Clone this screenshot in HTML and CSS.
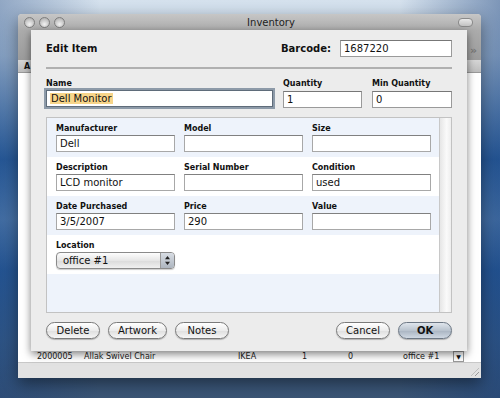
FILE: index.html
```html
<!DOCTYPE html>
<html lang="en">
<head>
  <meta charset="UTF-8" />
  <title>Inventory</title>
  <link rel="stylesheet" href="styles.css">
</head>
<body>

  <div class="window">
    <div class="titlebar">
      <div class="lights">
        <span class="light"></span>
        <span class="light"></span>
        <span class="light"></span>
      </div>
      <div class="title">Inventory</div>
      <span class="pill"></span>
    </div>

    <div class="toolbar">
      <span class="chevron">&raquo;</span>
    </div>

    <div class="table-head">
      <span class="th">A</span>
    </div>

    <div class="table-body">
      <div class="table-rows">
        <div class="trow">
          <span class="c-id">2000005</span>
          <span class="c-name">Allak Swivel Chair</span>
          <span class="c-maker">IKEA</span>
          <span class="c-qty">1</span>
          <span class="c-min">0</span>
          <span class="c-loc">office #1</span>
        </div>
      </div>
      <div class="table-scroll">
        <span class="arrow-down">&#9660;</span>
      </div>
    </div>

    <div class="statusbar">
      <span class="grip"></span>
    </div>

    <!-- sheet dialog over the window -->
    <div class="sheet">
      <div class="sheet-head">
        <span class="sheet-title">Edit Item</span>
        <div class="barcode">
          <label for="barcode">Barcode:</label>
          <input type="text" id="barcode" class="field field-barcode" value="1687220">
        </div>
      </div>

      <div class="top-fields">
        <div class="group g-name">
          <label>Name</label>
          <div class="field focused"><span class="sel">Dell Monitor</span></div>
        </div>
        <div class="group g-qty">
          <label>Quantity</label>
          <div class="field">1</div>
        </div>
        <div class="group g-min">
          <label>Min Quantity</label>
          <div class="field">0</div>
        </div>
      </div>

      <div class="scroll-box">
        <div class="rows">
          <div class="row alt">
            <div class="group"><label>Manufacturer</label><div class="field">Dell</div></div>
            <div class="group"><label>Model</label><div class="field"></div></div>
            <div class="group"><label>Size</label><div class="field"></div></div>
          </div>
          <div class="row">
            <div class="group"><label>Description</label><div class="field">LCD monitor</div></div>
            <div class="group"><label>Serial Number</label><div class="field"></div></div>
            <div class="group"><label>Condition</label><div class="field">used</div></div>
          </div>
          <div class="row alt">
            <div class="group"><label>Date Purchased</label><div class="field">3/5/2007</div></div>
            <div class="group"><label>Price</label><div class="field">290</div></div>
            <div class="group"><label>Value</label><div class="field"></div></div>
          </div>
          <div class="row">
            <div class="group">
              <label>Location</label>
              <div class="popup">
                <span>office #1</span>
                <span class="stepper">
                  <svg width="7" height="11" viewBox="0 0 7 11">
                    <path d="M3.5 1 L6 4.2 L1 4.2 Z M3.5 10 L6 6.8 L1 6.8 Z" fill="#222"/>
                  </svg>
                </span>
              </div>
            </div>
          </div>
          <div class="row alt filler"></div>
        </div>
        <div class="vscroll"></div>
      </div>

      <div class="buttons">
        <div class="btn-group">
          <button class="btn">Delete</button>
          <button class="btn btn-wide">Artwork</button>
          <button class="btn">Notes</button>
        </div>
        <div class="btn-group">
          <button class="btn">Cancel</button>
          <button class="btn btn-default">OK</button>
        </div>
      </div>
    </div>
  </div>

</body>
</html>
```

FILE: styles.css
```css
:root {
  --sheet-bg: #ececec;
  --row-alt: #eef3fb;
  --field-border: #9a9a9a;
  --text: #111;
}

body {
  margin: 0;
  width: 500px;
  height: 398px;
  overflow: hidden;
  font-family: "DejaVu Sans", Verdana, sans-serif;
  color: var(--text);
  background:
    linear-gradient(to right, rgba(20, 60, 120, 0.35) 0%, rgba(255, 255, 255, 0) 20%, rgba(255, 255, 255, 0) 80%, rgba(20, 60, 120, 0.45) 100%),
    linear-gradient(to bottom, #d5e1ed 0%, #bcd0e4 14%, #6f96c2 28%, #2f64a3 40%, #5a86b8 55%, #2c5f9d 68%, #3a5f8b 85%, #3b5575 100%);
}

.window {
  position: relative;
  width: 463px;
  height: 364px;
  margin: 14px 0 0 18px;
  display: flex;
  flex-direction: column;
  background: #dcdcdc;
  box-shadow: 0 6px 16px rgba(0, 0, 0, 0.45);
  border-radius: 4px 4px 0 0;
}

.titlebar {
  height: 16px;
  display: flex;
  align-items: center;
  justify-content: space-between;
  padding: 0 8px 0 6px;
  background: linear-gradient(#c6c6c6, #acacac);
  border-radius: 4px 4px 0 0;
}

.lights {
  display: flex;
  gap: 4px;
  width: 60px;
}

.light {
  width: 11px;
  height: 11px;
  border-radius: 50%;
  border: 1px solid #7e7e7e;
  box-sizing: border-box;
  background: radial-gradient(circle at 50% 70%, #f4f4f4, #c4c4c4 60%, #a0a0a0);
}

.title {
  font-size: 10px;
  color: #222;
}

.pill {
  width: 13px;
  height: 7px;
  border-radius: 4px;
  border: 1px solid #8a8a8a;
  background: linear-gradient(#e8e8e8, #c4c4c4);
}

.toolbar {
  height: 30px;
  display: flex;
  justify-content: flex-end;
  align-items: center;
  padding-right: 4px;
  background: linear-gradient(#acacac, #9c9c9c);
}

.chevron {
  font-size: 11px;
  font-weight: bold;
  color: #777;
  margin-top: 10px;
}

.table-head {
  height: 12px;
  display: flex;
  align-items: center;
  padding-left: 6px;
  background: linear-gradient(#d6d6d6, #bdbdbd);
  border-bottom: 1px solid #999;
  font-size: 8px;
  font-weight: bold;
}

.table-body {
  flex: 1;
  display: flex;
  background: #fff;
  padding-left: 14px;
}

.table-rows {
  flex: 1;
  display: flex;
  flex-direction: column;
  justify-content: flex-end;
}

.trow {
  height: 11px;
  display: flex;
  align-items: center;
  font-size: 8px;
  color: #222;
}

.c-id { width: 47px; margin-left: 5px; }
.c-name { width: 154px; }
.c-maker { width: 64px; }
.c-qty { width: 46px; }
.c-min { width: 55px; }
.c-loc { width: 50px; }

.table-scroll {
  width: 11px;
  margin-right: 17px;
  display: flex;
  flex-direction: column;
  justify-content: flex-end;
}

.arrow-down {
  height: 11px;
  border: 1px solid #999;
  box-sizing: border-box;
  font-size: 6px;
  text-align: center;
  line-height: 9px;
}

.statusbar {
  height: 15px;
  display: flex;
  justify-content: flex-end;
  align-items: flex-end;
  background: #e2e2e2;
  border-top: 1px solid #c8c8c8;
}

.grip {
  width: 8px;
  height: 8px;
  margin: 0 2px 2px 0;
  background: repeating-linear-gradient(135deg, transparent 0 2px, #999 2px 3px);
  clip-path: polygon(100% 0, 100% 100%, 0 100%);
}

/* sheet */

.sheet {
  position: absolute;
  left: 13px;
  top: 16px;
  width: 436px;
  height: 321px;
  box-sizing: border-box;
  padding: 0 15px;
  background: var(--sheet-bg);
  box-shadow: 0 3px 8px rgba(0, 0, 0, 0.5);
}

.sheet-head {
  height: 37px;
  display: flex;
  align-items: center;
  justify-content: space-between;
  border-bottom: 2px solid #b0b0b0;
  margin-bottom: 9px;
}

.sheet-title {
  font-size: 10px;
  font-weight: bold;
}

.barcode {
  display: flex;
  align-items: center;
  gap: 9px;
}

.barcode label {
  font-size: 10px;
  font-weight: bold;
}

.field {
  height: 17px;
  box-sizing: border-box;
  border: 1px solid var(--field-border);
  border-top-color: #777;
  background: #fff;
  font-family: inherit;
  font-size: 10px;
  line-height: 15px;
  padding: 0 3px;
  color: var(--text);
}

.field-barcode {
  width: 112px;
  outline: none;
}

.top-fields {
  display: flex;
  gap: 10px;
  margin-bottom: 9px;
}

.group {
  display: flex;
  flex-direction: column;
}

.group label {
  height: 12px;
  font-size: 8px;
  font-weight: bold;
  line-height: 12px;
}

.g-name { width: 227px; }
.g-qty { width: 79px; }
.g-min { width: 80px; }

.g-qty .field,
.g-min .field {
  margin-top: 1px;
}

.field.focused {
  border-color: #5f6c7a;
  box-shadow: 0 0 0 2px #8d9aa8;
}

.sel {
  background: #f7d58a;
  padding: 0 1px;
}

.scroll-box {
  height: 194px;
  display: flex;
  border: 1px solid #c2c2c2;
  background: #fff;
  overflow: hidden;
}

.rows {
  flex: 1;
}

.row {
  height: 39px;
  box-sizing: border-box;
  padding: 5px 0 0 9px;
  display: grid;
  grid-template-columns: 119px 119px 119px;
  column-gap: 9px;
}

.row.alt {
  background: var(--row-alt);
}

.row .field {
  border-color: #a8a8a8;
  border-top-color: #808080;
}

.popup {
  height: 17px;
  box-sizing: border-box;
  display: flex;
  align-items: center;
  justify-content: space-between;
  padding-left: 6px;
  border: 1px solid #8a8a8a;
  border-radius: 4px;
  background: linear-gradient(#fdfdfd, #e6e6e6 50%, #dadada 51%, #f0f0f0);
  font-size: 10px;
  box-shadow: 0 1px 1px rgba(0, 0, 0, 0.2);
}

.stepper {
  width: 13px;
  height: 15px;
  display: flex;
  align-items: center;
  justify-content: center;
  border-left: 1px solid #9a9a9a;
  border-radius: 0 3px 3px 0;
  background: linear-gradient(#d8dde4, #aeb6c0);
}

.vscroll {
  width: 11px;
  border-left: 1px solid #c8c8c8;
  background: linear-gradient(to right, #e6e6e6, #fafafa 60%, #eeeeee);
}

.buttons {
  display: flex;
  justify-content: space-between;
  margin-top: 9px;
}

.btn-group {
  display: flex;
  gap: 8px;
}

.btn {
  width: 54px;
  height: 17px;
  padding: 0;
  border: 1px solid #7a7a7a;
  border-radius: 9px;
  background: linear-gradient(#ffffff, #ececec 50%, #dedede 51%, #f6f6f6);
  font-family: inherit;
  font-size: 10px;
  color: #111;
  box-shadow: 0 1px 1px rgba(0, 0, 0, 0.25);
}

.btn-wide {
  width: 59px;
}

.btn-default {
  font-weight: bold;
  background: linear-gradient(#dfe5ec, #b9c3ce 50%, #a9b4c1 51%, #cfd8e2);
  border-color: #6c7784;
}
```
